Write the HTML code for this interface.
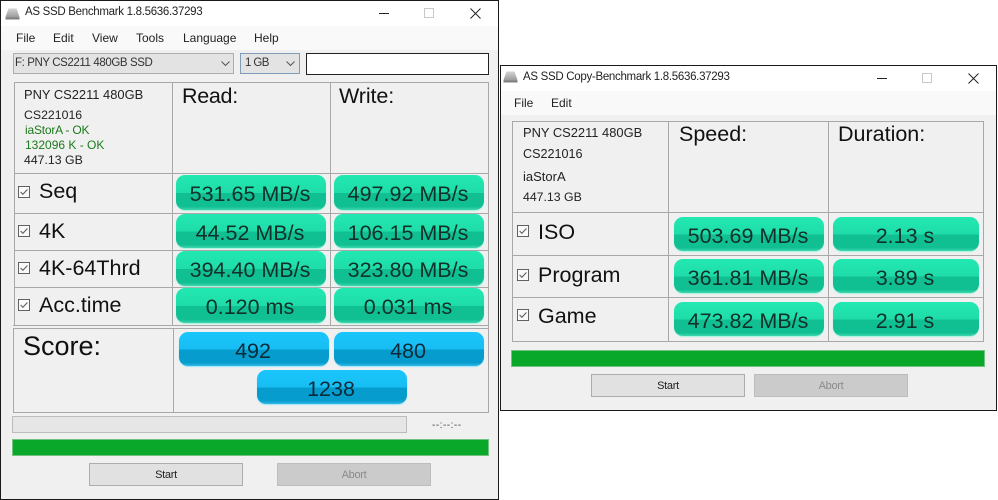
<!DOCTYPE html>
<html><head><meta charset="utf-8">
<style>
html,body{margin:0;padding:0;background:#fff}
body{width:998px;height:500px;position:relative;overflow:hidden;font-family:"Liberation Sans",sans-serif;color:#111}
div,span,svg{position:absolute;box-sizing:border-box}
.win{background:#f0f0f0;border:1px solid #1a1a1a}
.title{background:#fff}
.menu{background:#f9f9f9}
.t{white-space:nowrap;line-height:1}
.ti{font-size:11.5px;letter-spacing:-.3px;color:#222}
.m{font-size:12px;color:#222}
.h{background:#a8a8a8;height:1px}
.v{background:#a8a8a8;width:1px}
.big{font-size:21.5px;color:#111}
.inf{font-size:12.3px;color:#222}
.pny{font-size:12.9px}
.g{color:#1c7a1c;font-size:12px}
.p{display:flex;align-items:center;justify-content:center;border-radius:9px;font-size:21.5px;color:#12302a;white-space:nowrap;padding:4px 2px 0 0;box-shadow:0 1px 1px #a6f2de}
.gr{background:linear-gradient(#22e8b1 0,#1fdca8 52%,#10bf92 52%,#10bf92 90%,#3ed8ae 100%)}
.bl{background:linear-gradient(#1ac6fc 0,#17bdf2 52%,#069ccd 52%,#069ccd 90%,#30b8e4 100%);color:#0c2a38;box-shadow:0 1px 1px #a0e4fb}
.btn{display:flex;align-items:center;justify-content:center;font-size:11px;letter-spacing:-.3px;background:#e1e1e1;border:1px solid #adadad;color:#222}
.dis{background:#cbcbcb;border-color:#bdbdbd;color:#8a8a8a}
.bar{background:#0aa82a;border:1px solid #70c480}
</style></head><body>

<svg width="0" height="0" style="position:absolute"><defs>
<linearGradient id="dr" x1="0" y1="0" x2="0" y2="1"><stop offset="0" stop-color="#d4d4d4"/><stop offset="1" stop-color="#8c8c8c"/></linearGradient>
<symbol id="drive" viewBox="0 0 15 12"><path d="M3.5 0.5H11.5L14.5 9V11.5H0.5V9Z" fill="url(#dr)"/><path d="M0.5 9.5H14.5V11.5H0.5Z" fill="#808080"/></symbol>
<symbol id="chk" viewBox="0 0 13 13"><rect x="0.5" y="0.5" width="12" height="12" fill="#fafafa" stroke="#555"/><path d="M2.8 6.5L5.3 9L10.2 3.8" fill="none" stroke="#666" stroke-width="1.3"/></symbol>
</defs></svg>

<!-- LEFT WINDOW -->
<div class="win" style="left:0;top:0;width:499px;height:500px;border-top-width:1px"></div>
<div class="title" style="left:1px;top:1px;width:497px;height:25px"></div>
<div class="menu" style="left:1px;top:26px;width:497px;height:24px"></div>
<svg style="left:5px;top:8px" width="15" height="12"><use href="#drive"/></svg>
<span class="t ti" style="left:25px;top:7px">AS SSD Benchmark 1.8.5636.37293</span>
<div style="left:379px;top:13px;width:10px;height:1px;background:#222"></div>
<div style="left:424px;top:8px;width:10px;height:10px;border:1px solid #c8c8c8"></div>
<svg style="left:470px;top:8px" width="11" height="11"><path d="M0.5 0.5L10.5 10.5M10.5 0.5L0.5 10.5" stroke="#222" stroke-width="1"/></svg>
<span class="t m" style="left:16px;top:32px">File</span>
<span class="t m" style="left:53px;top:32px">Edit</span>
<span class="t m" style="left:92px;top:32px">View</span>
<span class="t m" style="left:136px;top:32px">Tools</span>
<span class="t m" style="left:183px;top:32px">Language</span>
<span class="t m" style="left:254px;top:32px">Help</span>

<div style="left:13px;top:53px;width:221px;height:21px;background:#e3e3e3;border:1px solid #adadad"></div>
<span class="t" style="left:15px;top:58px;color:#333;font-size:11.5px;letter-spacing:-.4px">F: PNY CS2211 480GB SSD</span>
<svg style="left:221px;top:61px" width="9" height="6"><path d="M0.5 0.5L4.5 4.5L8.5 0.5" fill="none" stroke="#555"/></svg>
<div style="left:240px;top:53px;width:60px;height:21px;background:#e3e3e3;border:1px solid #7f9db9"></div>
<span class="t" style="left:245px;top:58px;color:#333;font-size:11.5px;letter-spacing:-.6px">1 GB</span>
<svg style="left:286px;top:61px" width="9" height="6"><path d="M0.5 0.5L4.5 4.5L8.5 0.5" fill="none" stroke="#555"/></svg>
<div style="left:306px;top:53px;width:183px;height:22px;background:#fff;border:1px solid #222"></div>

<!-- left grid -->
<div class="h" style="left:14px;top:82px;width:475px"></div>
<div class="h" style="left:14px;top:173px;width:475px"></div>
<div class="h" style="left:14px;top:213px;width:475px"></div>
<div class="h" style="left:14px;top:250px;width:475px"></div>
<div class="h" style="left:14px;top:287px;width:475px"></div>
<div class="h" style="left:13px;top:325px;width:476px"></div>
<div class="h" style="left:13px;top:412px;width:476px"></div>
<div class="h" style="left:13px;top:328px;width:476px"></div>
<div class="v" style="left:14px;top:82px;height:244px"></div>
<div class="v" style="left:172px;top:82px;height:244px"></div>
<div class="v" style="left:330px;top:82px;height:244px"></div>
<div class="v" style="left:488px;top:82px;height:331px"></div>
<div class="v" style="left:13px;top:328px;height:85px"></div>
<div class="v" style="left:173px;top:328px;height:85px"></div>

<span class="t inf pny" style="left:24px;top:89px">PNY CS2211 480GB</span>
<span class="t inf" style="left:24px;top:109px">CS221016</span>
<span class="t inf g" style="left:25px;top:124px;letter-spacing:-.2px">iaStorA - OK</span>
<span class="t inf g" style="left:25px;top:139px">132096 K - OK</span>
<span class="t inf" style="left:24px;top:154px">447.13 GB</span>
<span class="t big" style="left:182px;top:86px;letter-spacing:-.3px">Read:</span>
<span class="t big" style="left:339px;top:86px;letter-spacing:-.1px">Write:</span>

<svg style="left:18px;top:186px" width="12" height="12"><use href="#chk"/></svg>
<span class="t big" style="left:39px;top:181px">Seq</span>
<svg style="left:18px;top:225px" width="12" height="12"><use href="#chk"/></svg>
<span class="t big" style="left:39px;top:221px">4K</span>
<svg style="left:18px;top:262px" width="12" height="12"><use href="#chk"/></svg>
<span class="t big" style="left:39px;top:258px">4K-64Thrd</span>
<svg style="left:18px;top:299px" width="12" height="12"><use href="#chk"/></svg>
<span class="t big" style="left:39px;top:295px">Acc.time</span>

<div class="p gr" style="left:176px;top:175px;width:150px;height:35px">531.65 MB/s</div>
<div class="p gr" style="left:334px;top:175px;width:150px;height:35px">497.92 MB/s</div>
<div class="p gr" style="left:176px;top:214px;width:150px;height:34px">44.52 MB/s</div>
<div class="p gr" style="left:334px;top:214px;width:150px;height:34px">106.15 MB/s</div>
<div class="p gr" style="left:176px;top:251px;width:150px;height:35px">394.40 MB/s</div>
<div class="p gr" style="left:334px;top:251px;width:150px;height:35px">323.80 MB/s</div>
<div class="p gr" style="left:176px;top:288px;width:150px;height:35px">0.120 ms</div>
<div class="p gr" style="left:334px;top:288px;width:150px;height:35px">0.031 ms</div>

<span class="t" style="left:23px;top:333px;font-size:27px">Score:</span>
<div class="p bl" style="left:179px;top:332px;width:150px;height:34px">492</div>
<div class="p bl" style="left:334px;top:332px;width:150px;height:34px">480</div>
<div class="p bl" style="left:257px;top:370px;width:150px;height:34px">1238</div>

<div style="left:12px;top:416px;width:395px;height:17px;background:#e6e6e6;border:1px solid #bcbcbc"></div>
<span class="t" style="left:432px;top:421px;font-size:10px;letter-spacing:.5px;color:#444">--:--:--</span>
<div class="bar" style="left:12px;top:439px;width:477px;height:17px"></div>
<div class="btn" style="left:89px;top:463px;width:154px;height:23px">Start</div>
<div class="btn dis" style="left:277px;top:463px;width:154px;height:23px">Abort</div>

<!-- RIGHT WINDOW -->
<div class="win" style="left:500px;top:65px;width:497px;height:346px"></div>
<div class="title" style="left:501px;top:66px;width:495px;height:25px"></div>
<div class="menu" style="left:501px;top:91px;width:495px;height:24px"></div>
<svg style="left:503px;top:71px" width="15" height="12"><use href="#drive"/></svg>
<span class="t ti" style="left:523px;top:72px">AS SSD Copy-Benchmark 1.8.5636.37293</span>
<div style="left:877px;top:78px;width:10px;height:1px;background:#222"></div>
<div style="left:922px;top:73px;width:10px;height:10px;border:1px solid #c8c8c8"></div>
<svg style="left:968px;top:73px" width="11" height="11"><path d="M0.5 0.5L10.5 10.5M10.5 0.5L0.5 10.5" stroke="#222" stroke-width="1"/></svg>
<span class="t m" style="left:514px;top:97px">File</span>
<span class="t m" style="left:551px;top:97px">Edit</span>

<div class="h" style="left:512px;top:121px;width:472px"></div>
<div class="h" style="left:512px;top:212px;width:472px"></div>
<div class="h" style="left:512px;top:255px;width:472px"></div>
<div class="h" style="left:512px;top:297px;width:472px"></div>
<div class="h" style="left:512px;top:341px;width:472px"></div>
<div class="v" style="left:512px;top:121px;height:221px"></div>
<div class="v" style="left:668px;top:121px;height:221px"></div>
<div class="v" style="left:828px;top:121px;height:221px"></div>
<div class="v" style="left:983px;top:121px;height:221px"></div>

<span class="t inf pny" style="left:523px;top:127px">PNY CS2211 480GB</span>
<span class="t inf" style="left:523px;top:148px;font-size:12.6px">CS221016</span>
<span class="t inf" style="left:523px;top:170px;font-size:13px">iaStorA</span>
<span class="t inf" style="left:523px;top:191px">447.13 GB</span>
<span class="t big" style="left:679px;top:124px">Speed:</span>
<span class="t big" style="left:838px;top:124px">Duration:</span>

<svg style="left:517px;top:225px" width="12" height="12"><use href="#chk"/></svg>
<span class="t big" style="left:538px;top:222px">ISO</span>
<svg style="left:517px;top:269px" width="12" height="12"><use href="#chk"/></svg>
<span class="t big" style="left:538px;top:265px">Program</span>
<svg style="left:517px;top:309px" width="12" height="12"><use href="#chk"/></svg>
<span class="t big" style="left:538px;top:306px">Game</span>

<div class="p gr" style="left:674px;top:217px;width:150px;height:34px">503.69 MB/s</div>
<div class="p gr" style="left:833px;top:217px;width:146px;height:34px">2.13 s</div>
<div class="p gr" style="left:674px;top:259px;width:150px;height:34px">361.81 MB/s</div>
<div class="p gr" style="left:833px;top:259px;width:146px;height:34px">3.89 s</div>
<div class="p gr" style="left:674px;top:302px;width:150px;height:34px">473.82 MB/s</div>
<div class="p gr" style="left:833px;top:302px;width:146px;height:34px">2.91 s</div>

<div class="bar" style="left:511px;top:350px;width:474px;height:17px"></div>
<div class="btn" style="left:591px;top:374px;width:154px;height:23px">Start</div>
<div class="btn dis" style="left:754px;top:374px;width:154px;height:23px">Abort</div>
</body></html>
